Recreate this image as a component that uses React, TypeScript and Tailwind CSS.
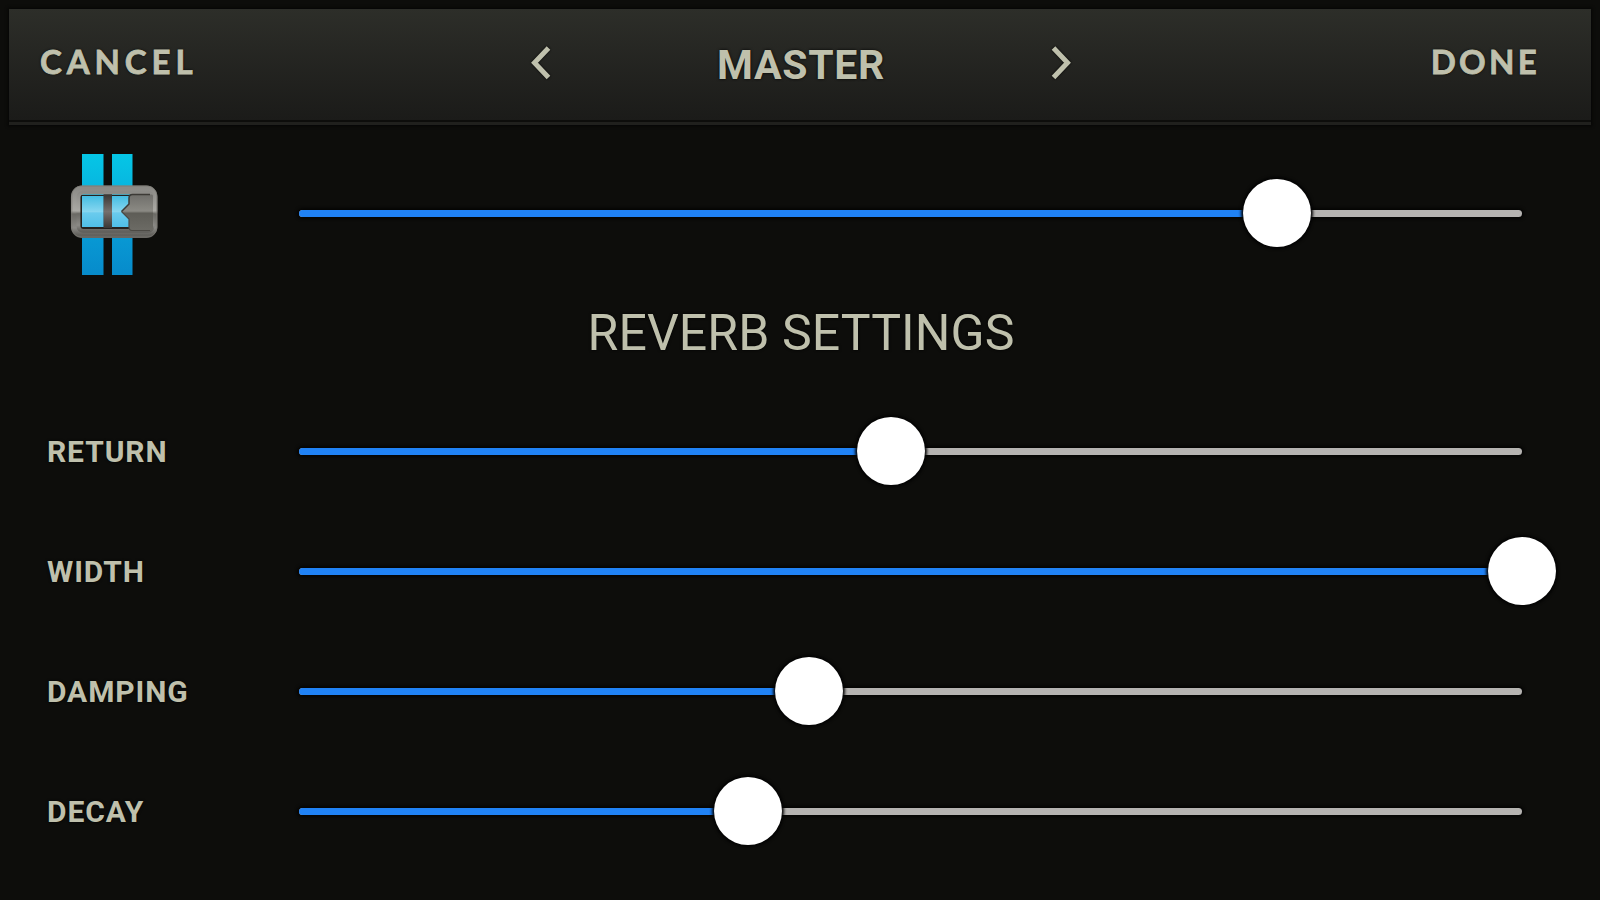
import { useState } from "react";

interface SliderProps {
  label: string;
  value: number;
  onChange: (value: number) => void;
}

interface ReverbSetting {
  id: string;
  label: string;
  value: number;
}

const REVERB_SETTINGS: ReverbSetting[] = [
  { id: "return", label: "RETURN", value: 48.4 },
  { id: "width", label: "WIDTH", value: 100 },
  { id: "damping", label: "DAMPING", value: 41.7 },
  { id: "decay", label: "DECAY", value: 36.75 },
];

function Slider({ label, value, onChange }: SliderProps) {
  const handlePointer = (e: React.PointerEvent<HTMLDivElement>) => {
    if (e.buttons !== 1) return;
    const rect = e.currentTarget.getBoundingClientRect();
    const next = ((e.clientX - rect.left) / rect.width) * 100;
    onChange(Math.min(100, Math.max(0, next)));
  };

  return (
    <div
      role="slider"
      aria-label={label}
      aria-valuenow={Math.round(value)}
      className="relative flex h-[70px] w-[1223px] items-center"
      onPointerDown={handlePointer}
      onPointerMove={handlePointer}
    >
      <div className="h-[7px] w-full overflow-hidden rounded-full bg-[#b5b3b1] shadow-[0_0_3px_2px_#050504]">
        <div className="h-full bg-[#2082f5]" style={{ width: `${value}%` }} />
      </div>
      <div
        className="absolute top-[0.5px] size-[68px] -translate-x-1/2 rounded-full bg-white shadow-[0_0_3px_2px_#030303]"
        style={{ left: `${value}%` }}
      />
    </div>
  );
}

function MasterIcon() {
  return (
    <svg width="90" height="124" viewBox="0 0 90 124" fill="none" className="mt-px">
      <defs>
        <linearGradient id="bar" x1="0" y1="0" x2="0" y2="1">
          <stop offset="0" stopColor="#05c6e6" />
          <stop offset="0.3" stopColor="#08b5df" />
          <stop offset="0.7" stopColor="#0898d3" />
          <stop offset="1" stopColor="#078bcb" />
        </linearGradient>
        <linearGradient id="glass" x1="0" y1="0" x2="0" y2="1">
          <stop offset="0" stopColor="#45bde2" />
          <stop offset="0.5" stopColor="#86d6f0" />
          <stop offset="0.55" stopColor="#6acbed" />
          <stop offset="1" stopColor="#50bfe8" />
        </linearGradient>
        <linearGradient id="frame" x1="0" y1="0" x2="0" y2="1">
          <stop offset="0" stopColor="#8c8b87" />
          <stop offset="0.48" stopColor="#aaa9a4" />
          <stop offset="0.55" stopColor="#6a6964" />
          <stop offset="0.85" stopColor="#8b8a86" />
          <stop offset="1" stopColor="#62615d" />
        </linearGradient>
        <linearGradient id="knob" x1="0" y1="0" x2="0" y2="1">
          <stop offset="0" stopColor="#6f6e6a" />
          <stop offset="0.46" stopColor="#8b8a84" />
          <stop offset="0.52" stopColor="#5e5d57" />
          <stop offset="1" stopColor="#6c6b65" />
        </linearGradient>
        <linearGradient id="gap" x1="0" y1="0" x2="0" y2="1">
          <stop offset="0" stopColor="#3b3734" />
          <stop offset="0.5" stopColor="#75706d" />
          <stop offset="1" stopColor="#3b3734" />
        </linearGradient>
      </defs>
      <rect x="12" y="2" width="21.5" height="121" fill="url(#bar)" />
      <rect x="42" y="2" width="20.5" height="121" fill="url(#bar)" />
      <rect x="10.5" y="43" width="53" height="34" fill="#26221f" />
      <rect x="33.5" y="43" width="8.5" height="33" fill="url(#gap)" />
      <rect x="12" y="44" width="21.5" height="31" fill="url(#glass)" />
      <rect x="42" y="44" width="20.5" height="31" fill="url(#glass)" />
      <rect x="4.2" y="36.7" width="80" height="46" rx="8" stroke="url(#frame)" strokeWidth="6.5" />
      <rect x="1.8" y="34" width="85" height="51" rx="9.5" stroke="#777671" strokeOpacity="0.7" />
      <rect x="8.5" y="40.5" width="74" height="38.5" rx="5" stroke="url(#frame)" strokeWidth="4" />
      <path d="M51.5 59.5L59 52V46Q59 42.5 62.5 42.5H82Q83 42.5 83 44V76Q83 78.5 81 78.5H62Q59 78.5 59 75V67Z" fill="url(#knob)" />
      <path d="M51.5 59.5L59 52V46Q59 42.5 62.5 42.5H80" stroke="#3c3a36" strokeWidth="1.5" />
      <path d="M51.5 59.5L59 67V75Q59 78.5 62 78.5H80" stroke="#4b4944" strokeWidth="1.2" />
    </svg>
  );
}

function Chevron({ flipped = false }: { flipped?: boolean }) {
  return (
    <svg
      width="24"
      height="36"
      viewBox="0 0 24 36"
      fill="none"
      className={flipped ? "-scale-x-100 drop-shadow-[0_0_1px_#000]" : "drop-shadow-[0_0_1px_#000]"}
    >
      <path d="M19.5 3L5.5 17.8L19.5 32.5" stroke="#bfc0ac" strokeWidth="5" />
    </svg>
  );
}

export default function App() {
  const [master, setMaster] = useState(80);
  const [settings, setSettings] = useState(REVERB_SETTINGS);

  const updateSetting = (id: string, value: number) => {
    setSettings((prev) => prev.map((s) => (s.id === id ? { ...s, value } : s)));
  };

  return (
    <div className="h-[900px] w-[1600px] overflow-hidden bg-[#0d0d0b] px-2 pt-[9px] font-['Roboto',sans-serif] text-[#bfc0ac] select-none">
      <header className="mx-px mb-px h-[116px] border-b-3 border-[#20201d] shadow-[0_0_3px_1px_#060605]">
        <div className="flex h-[113px] items-center justify-between border-b-2 border-[#0d0d0b] bg-linear-to-b from-[#2d2e29] to-[#1b1b19] pr-[51px] pb-1 pl-[31px]">
          <button className="w-[180px] pb-0.5 text-left font-['Lato',sans-serif] text-[33px] leading-none font-bold tracking-[4.9px] [-webkit-text-stroke:0.8px_#bfc0ac] [text-shadow:0_0_3px_#000]">
            CANCEL
          </button>
          <div className="-mr-0.5 flex w-[545px] items-center justify-between">
            <button aria-label="Previous">
              <Chevron />
            </button>
            <h1 className="pt-[5px] text-[41px] leading-none font-bold tracking-[0.7px] [text-shadow:0_0_3px_#000]">MASTER</h1>
            <button aria-label="Next">
              <Chevron flipped />
            </button>
          </div>
          <button className="w-[160px] pb-0.5 text-right font-['Lato',sans-serif] text-[33px] leading-none font-bold tracking-[3.3px] [-webkit-text-stroke:0.8px_#bfc0ac] [text-shadow:0_0_3px_#000]">
            DONE
          </button>
        </div>
      </header>

      <main>
        <section className="flex h-[174px] items-center pl-[62px]">
          <div className="w-[229px]">
            <MasterIcon />
          </div>
          <Slider label="Master" value={master} onChange={setMaster} />
        </section>

        <h2 className="flex h-[91px] items-center justify-center pb-[25px] pl-0.5 text-[50px] leading-none tracking-[0.1px] [text-shadow:0_0_3px_#000]">
          REVERB SETTINGS
        </h2>

        {settings.map((s) => (
          <div key={s.id} className="flex h-[120px] items-center pl-[39px]">
            <span className="w-[252px] pt-px text-[30px] leading-none font-bold tracking-[0.9px] [text-shadow:0_0_3px_#000]">{s.label}</span>
            <Slider label={s.label} value={s.value} onChange={(v) => updateSetting(s.id, v)} />
          </div>
        ))}
      </main>
    </div>
  );
}
